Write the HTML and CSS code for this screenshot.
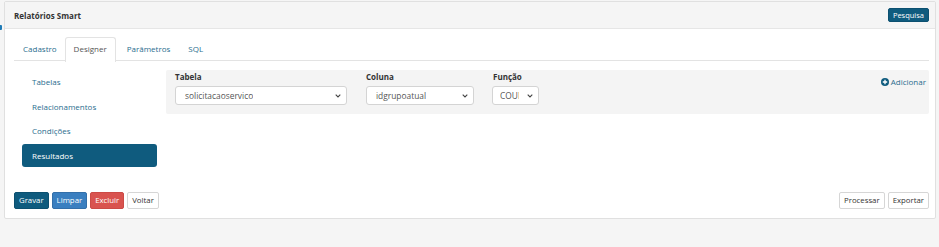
FILE: index.html
```html
<!DOCTYPE html>
<html lang="pt-BR">
<head>
  <meta charset="UTF-8" />
  <meta name="viewport" content="width=device-width, initial-scale=1.0"/>
  <title>Relatórios Smart</title>
  <link rel="stylesheet" href="styles.css">
</head>
<body>

  <div class="edge-mark"></div>

  <div class="panel">
    <div class="panel-heading">
      <span class="panel-title">Relatórios Smart</span>
      <button type="button" class="btn btn-dark btn-xs">Pesquisa</button>
    </div>

    <div class="panel-body">
      <ul class="tabs">
        <li>Cadastro</li>
        <li class="active">Designer</li>
        <li>Parâmetros</li>
        <li>SQL</li>
      </ul>

      <div class="tab-content">
        <ul class="side-nav">
          <li>Tabelas</li>
          <li>Relacionamentos</li>
          <li>Condições</li>
          <li class="active">Resultados</li>
        </ul>

        <div class="designer">
          <div class="field">
            <label>Tabela</label>
            <div class="select select-tabela">
              <span>solicitacaoservico</span>
              <svg width="6" height="4" viewBox="0 0 6 4"><path d="M0.7 0.7 L3 3 L5.3 0.7" fill="none" stroke="#444" stroke-width="1.1"/></svg>
            </div>
          </div>
          <div class="field">
            <label>Coluna</label>
            <div class="select select-coluna">
              <span>idgrupoatual</span>
              <svg width="6" height="4" viewBox="0 0 6 4"><path d="M0.7 0.7 L3 3 L5.3 0.7" fill="none" stroke="#444" stroke-width="1.1"/></svg>
            </div>
          </div>
          <div class="field">
            <label>Função</label>
            <div class="select select-funcao">
              <span>COUNT</span>
              <svg width="6" height="4" viewBox="0 0 6 4"><path d="M0.7 0.7 L3 3 L5.3 0.7" fill="none" stroke="#444" stroke-width="1.1"/></svg>
            </div>
          </div>

          <a class="add-link">
            <svg width="8" height="8" viewBox="0 0 8 8"><circle cx="4" cy="4" r="4" fill="#0f5b7e"/><path d="M4 1.8 V6.2 M1.8 4 H6.2" stroke="#fff" stroke-width="1.3"/></svg>
            Adicionar
          </a>
        </div>
      </div>

      <div class="actions">
        <div class="btn-group">
          <button type="button" class="btn btn-dark">Gravar</button>
          <button type="button" class="btn btn-primary">Limpar</button>
          <button type="button" class="btn btn-danger">Excluir</button>
          <button type="button" class="btn btn-default">Voltar</button>
        </div>
        <div class="btn-group">
          <button type="button" class="btn btn-default">Processar</button>
          <button type="button" class="btn btn-default">Exportar</button>
        </div>
      </div>
    </div>
  </div>

</body>
</html>
```

FILE: styles.css
```css
:root {
  --azul-escuro: #0f5b7e;
  --azul-link: #2a6d8e;
  --cinza-fundo: #f5f5f5;
  --borda: #e0e0e0;
}

* {
  box-sizing: border-box;
}

body {
  margin: 0;
  padding: 1px 4px 0 4px;
  font-family: "Open Sans", sans-serif;
  font-size: 8px;
  color: #333;
  background: var(--cinza-fundo);
}

ul {
  list-style: none;
  margin: 0;
  padding: 0;
}

.edge-mark {
  position: absolute;
  left: 0;
  top: 25px;
  width: 2px;
  height: 5px;
  background: #1f7bb6;
  border-radius: 0 1px 1px 0;
}

.panel {
  width: 932px;
  background: white;
  border: 1px solid var(--borda);
  border-radius: 2px;
}

.panel-heading {
  height: 27px;
  display: flex;
  align-items: center;
  justify-content: space-between;
  padding: 0 6px 0 9px;
  background: var(--cinza-fundo);
  border-bottom: 1px solid #e6e6e6;
}

.panel-title {
  font-weight: bold;
}

.panel-body {
  padding: 8px 6px 9px 9px;
}

/* abas */
.tabs {
  display: flex;
  border-bottom: 1px solid #e3e3e3;
  height: 24px;
}

.tabs li {
  height: 24px;
  line-height: 22px;
  padding: 0 8px;
  border: 1px solid transparent;
  border-bottom: none;
  color: var(--azul-link);
  border-radius: 3px 3px 0 0;
}

.tabs li:first-child {
  padding-right: 7px;
}

.tabs li.active {
  color: #555;
  background: white;
  border-color: #e3e3e3;
  height: 25px;
  margin-right: 2px;
}

.tab-content {
  display: flex;
  gap: 9px;
  padding: 9px 0 0 8px;
}

.side-nav {
  width: 135px;
  display: flex;
  flex-direction: column;
  gap: 1.5px;
}

.side-nav li {
  height: 23px;
  line-height: 23px;
  padding-left: 10px;
  color: var(--azul-link);
  border-radius: 3px;
}

.side-nav li.active {
  background: var(--azul-escuro);
  color: white;
}

/* designer */
.designer {
  flex: 1;
  align-self: flex-start;
  display: flex;
  align-items: flex-start;
  gap: 19px;
  padding: 1px 3px 9px 9px;
  background: #f4f4f4;
  border-radius: 2px;
}

.field label {
  display: block;
  font-weight: bold;
  line-height: 12px;
  margin-bottom: 3px;
}

.select {
  height: 19px;
  display: flex;
  align-items: center;
  justify-content: space-between;
  padding: 0 5px 0 9px;
  background: white;
  border: 1px solid #d4d4d4;
  border-radius: 3px;
  color: #555;
  font-size: 8.4px;
  overflow: hidden;
}

.select span {
  white-space: nowrap;
  overflow: hidden;
}

.select svg {
  flex-shrink: 0;
}

.select-tabela {
  width: 172px;
}

.select-coluna {
  width: 108px;
}

.select-funcao {
  width: 47px;
  padding-left: 7px;
  margin-left: -1px;
}

.select-funcao span {
  width: 19px;
}

.add-link {
  margin-left: auto;
  margin-top: 5px;
  display: flex;
  align-items: center;
  gap: 2px;
  color: var(--azul-link);
}

/* botões */
.actions {
  display: flex;
  justify-content: space-between;
  margin-top: 25px;
}

.btn-group {
  display: flex;
  gap: 3px;
}

.btn {
  height: 17px;
  padding: 0 4px;
  font-family: "Open Sans", sans-serif;
  font-size: 7.8px;
  border: 1px solid transparent;
  border-radius: 2px;
  cursor: pointer;
}

.btn-xs {
  height: 14px;
  padding: 0 4px;
  font-size: 7.5px;
}

.btn-dark {
  background: var(--azul-escuro);
  border-color: #0c5070;
  color: white;
}

.btn-primary {
  background: #3a7fc0;
  border-color: #336fa9;
  color: white;
}

.btn-danger {
  background: #d9534f;
  border-color: #cc4a46;
  color: white;
}

.btn-default {
  background: white;
  border-color: #d6d6d6;
  color: #333;
}
```
